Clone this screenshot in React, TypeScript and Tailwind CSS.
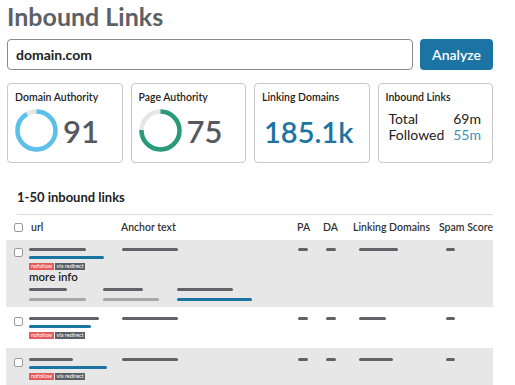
import React from 'react'

const FONT = { fontFamily: 'Lato, "Open Sans", sans-serif' }

const DARK = 'bg-[#5f6368]'
const BLUE = 'bg-[#1b75a3]'
const LIGHT = 'bg-[#a8a8a8]'

function Ring({ pct, color }: { pct: number; color: string }) {
  const r = 19
  const c = 2 * Math.PI * r
  return (
    <svg width="43" height="43" viewBox="0 0 43 43" className="shrink-0">
      <circle cx="21.5" cy="21.5" r={r} fill="none" stroke="#e6e6e6" strokeWidth="4.5" />
      <circle
        cx="21.5"
        cy="21.5"
        r={r}
        fill="none"
        stroke={color}
        strokeWidth="4.5"
        strokeDasharray={`${(c * pct) / 100} ${c}`}
        transform="rotate(-90 21.5 21.5)"
      />
    </svg>
  )
}

function Card({ title, children }: { title: string; children: React.ReactNode }) {
  return (
    <div className="h-[80px] rounded-[4px] border border-[#c8c8c8] bg-white px-[7px] pt-[6px]">
      <div className="text-[10.5px] font-semibold leading-[14px] text-[#222]">{title}</div>
      {children}
    </div>
  )
}

function Bar({ w, color, className = '' }: { w: number; color: string; className?: string }) {
  return <div className={`h-[3px] rounded-full ${color} ${className}`} style={{ width: w }} />
}

function Checkbox() {
  return <div className="h-[9px] w-[9px] rounded-[2px] border border-[#9a9a9a] bg-white" />
}

function Badges() {
  return (
    <div className="mt-[4px] flex gap-[1px] text-[5.5px] leading-[7px] text-white">
      <span className="h-[7px] w-[25px] bg-[#e55a5a] text-center">nofollow</span>
      <span className="h-[7px] w-[30px] bg-[#5b6066] text-center">via redirect</span>
    </div>
  )
}

const COLS = 'grid grid-cols-[23px_92px_176px_26px_30px_86px_54px]'

interface Row {
  url: number
  blue: number
  linking: number
  bg: boolean
  more?: boolean
}

const rows: Row[] = [
  { url: 57, blue: 75, linking: 39, bg: true, more: true },
  { url: 70, blue: 62, linking: 27, bg: false },
  { url: 44, blue: 78, linking: 34, bg: true },
]

function TableRow({ row, first }: { row: Row; first: boolean }) {
  return (
    <div className={`${COLS} ${row.bg ? 'bg-[#e7e7e7]' : 'bg-white'} ${first ? 'pt-[8px] pb-[6px]' : 'pt-[10px] pb-[9px]'}`}>
      <div className="pl-[8px]">
        <Checkbox />
      </div>
      <div>
        <Bar w={row.url} color={DARK} />
        <Bar w={row.blue} color={BLUE} className="mt-[5px]" />
        <Badges />
      </div>
      <div>
        <Bar w={56} color={DARK} className="ml-[1px]" />
      </div>
      <div>
        <Bar w={10} color={DARK} className="ml-[1px]" />
      </div>
      <div>
        <Bar w={10} color={DARK} className="ml-[3px]" />
      </div>
      <div>
        <Bar w={row.linking} color={DARK} className="ml-[6px]" />
      </div>
      <div>
        <Bar w={9} color={DARK} className="ml-[7px]" />
      </div>
      {row.more && (
        <div className="col-start-2 col-span-6">
          <div className="text-[11.5px] font-semibold leading-[14px] text-[#222]">more info</div>
          <div className="mt-[4px] grid grid-cols-[74px_74px_100px]">
            <div>
              <Bar w={38} color={DARK} />
              <Bar w={57} color={LIGHT} className="mt-[7px]" />
            </div>
            <div>
              <Bar w={40} color={DARK} />
              <Bar w={56} color={LIGHT} className="mt-[7px]" />
            </div>
            <div>
              <Bar w={56} color={DARK} />
              <Bar w={75} color={BLUE} className="mt-[7px]" />
            </div>
          </div>
        </div>
      )}
    </div>
  )
}

export default function App() {
  return (
    <div className="h-[385px] w-[515px] overflow-hidden bg-white pl-[7px] pr-[22px]" style={FONT}>
      <h1 className="pt-[1px] text-[25px] font-bold leading-[30px] text-[#5c6168]">Inbound Links</h1>

      <div className="mt-[8px] flex gap-[7px]">
        <div className="flex h-[31px] flex-1 items-center rounded-[4px] border border-[#8a8a8a] px-[8px] text-[14px] font-bold text-[#222]">
          domain.com
        </div>
        <button className="h-[31px] w-[73px] rounded-[4px] bg-[#1b74a4] text-[14px] font-semibold text-white">
          Analyze
        </button>
      </div>

      <div className="mt-[13px] grid grid-cols-4 gap-[8px]">
        <Card title="Domain Authority">
          <div className="mt-[5px] flex items-center gap-[5px]">
            <Ring pct={91} color="#5bc0ea" />
            <span className="text-[31px] font-semibold leading-[36px] text-[#55595f]">91</span>
          </div>
        </Card>
        <Card title="Page Authority">
          <div className="mt-[5px] flex items-center gap-[5px]">
            <Ring pct={75} color="#2a9b79" />
            <span className="text-[31px] font-semibold leading-[36px] text-[#55595f]">75</span>
          </div>
        </Card>
        <Card title="Linking Domains">
          <div className="mt-[10px] pl-[2px] text-[29px] font-semibold leading-[36px] text-[#1b75a3]">185.1k</div>
        </Card>
        <Card title="Inbound Links">
          <div className="mt-[7px] pl-[3px] pr-[4px] text-[14px] leading-[16px] text-[#222]">
            <div className="flex justify-between">
              <span>Total</span>
              <span>69m</span>
            </div>
            <div className="flex justify-between">
              <span>Followed</span>
              <span className="text-[#3b92bc]">55m</span>
            </div>
          </div>
        </Card>
      </div>

      <div className="mt-[26px] pl-[10px] text-[13px] font-bold leading-[16px] text-[#222]">1-50 inbound links</div>
      <div className="ml-[10px] mt-[9px] border-t border-[#dcdcdc]" />

      <div className="-ml-[1px]">
        <div className={`${COLS} h-[25px] items-center whitespace-nowrap text-[10.5px] font-semibold text-[#333]`}>
          <div className="pl-[8px]">
            <Checkbox />
          </div>
          <div className="pl-[2px]">url</div>
          <div>Anchor text</div>
          <div>PA</div>
          <div>DA</div>
          <div>Linking Domains</div>
          <div>Spam Score</div>
        </div>
        {rows.map((r, i) => (
          <TableRow key={i} row={r} first={i === 0} />
        ))}
      </div>
    </div>
  )
}
